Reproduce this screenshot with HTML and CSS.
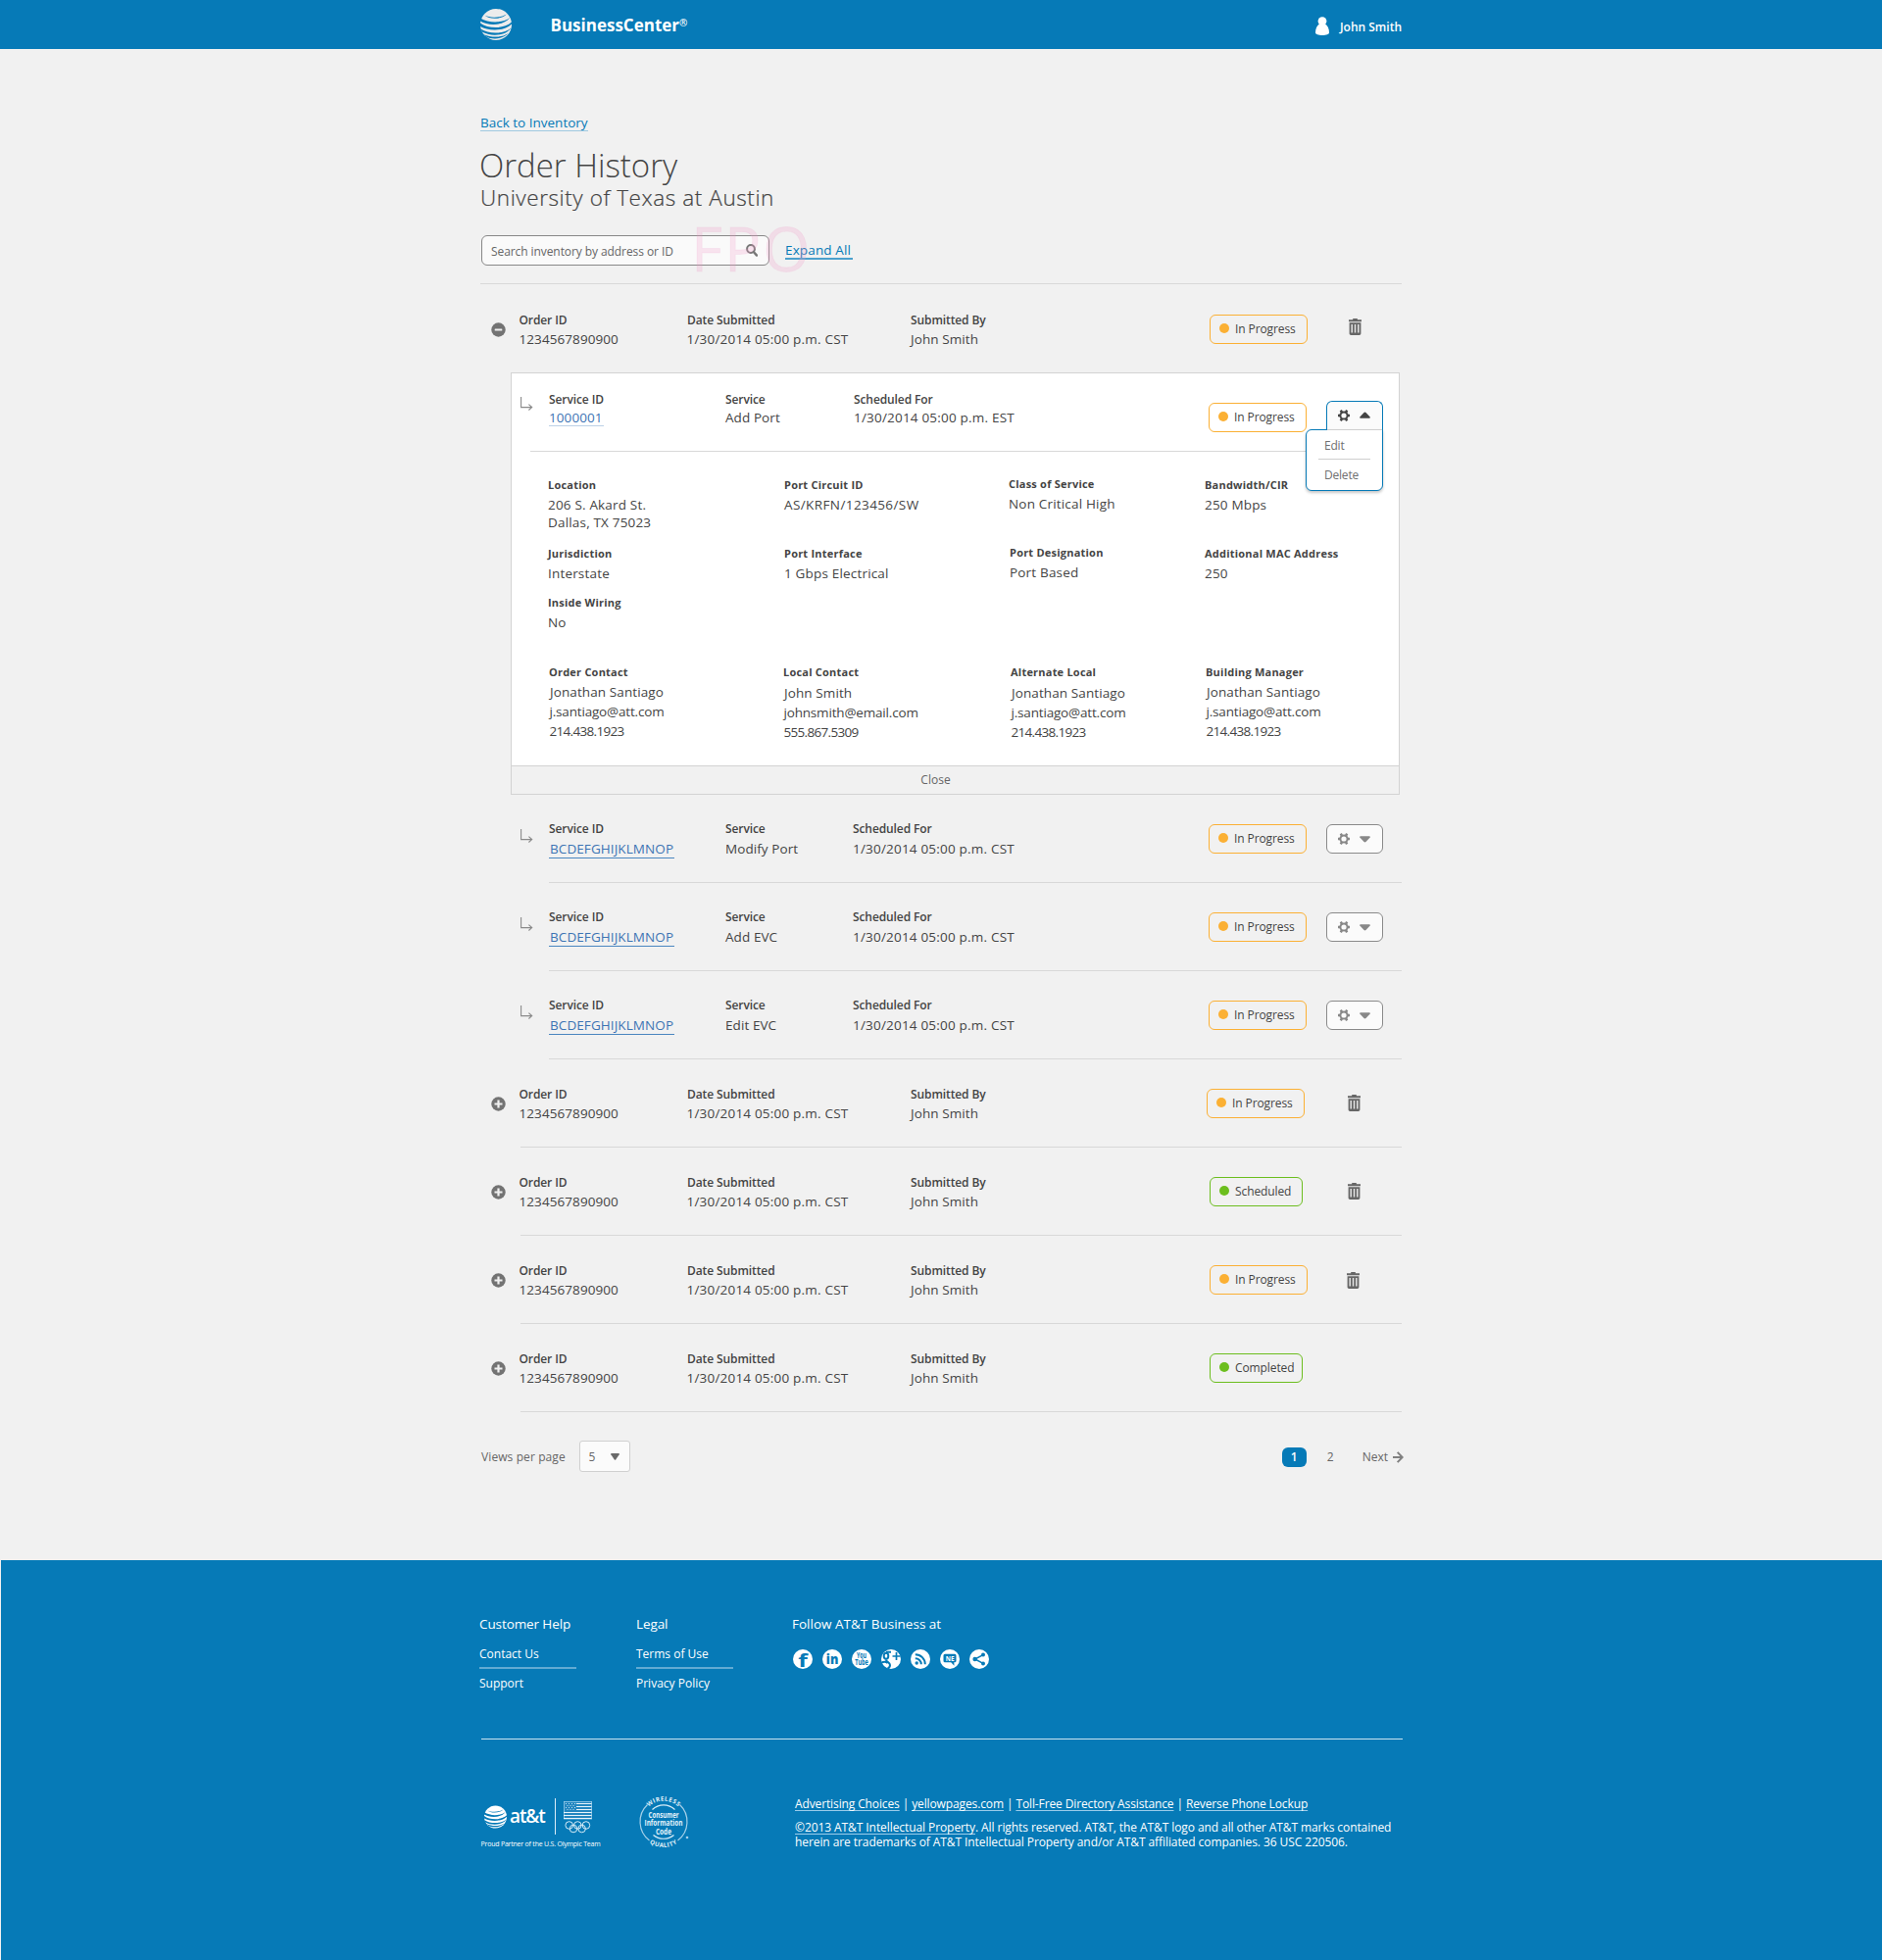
FILE: index.html
```html
<!DOCTYPE html>
<html lang="en">
<head>
<meta charset="utf-8">
<title>Order History</title>
<link rel="stylesheet" href="styles.css">
</head>
<body>
<svg class="sprite" aria-hidden="true">
  <symbol id="globe" viewBox="0 0 32 32">
    <circle cx="16" cy="16" r="16" fill="currentColor"/>
    <g class="globe-gap">
      <path d="M4.500 6.600C10 9.600 20 9.600 26.800 5.400C21.500 11 9.500 11.200 4.500 6.600Z"/>
      <path d="M0 9.500C9 15 23 14.600 30.200 9C24 17.400 8 17.600 0 12.500Z"/>
      <path d="M0 14.500C8 20.600 24 20.800 32 13.600L32 15.600C25 23.200 8 22.800 0 18Z"/>
      <path d="M.5 20.500C9 26.200 24 25.800 31.600 19.400C25 28.400 10 28.200 1.800 23.600Z"/>
      <path d="M4 26.200C11 29.600 22 29.600 28.600 25C22.500 31.600 11.500 31.400 6 28.400Z"/>
    </g>
  </symbol>
  <symbol id="minus" viewBox="0 0 15 15"><circle cx="7.5" cy="7.5" r="7.2" fill="#737373"/><rect x="3.7" y="6.4" width="7.6" height="2.2" rx=".6" fill="#f1f1f1"/></symbol>
  <symbol id="plus" viewBox="0 0 15 15"><circle cx="7.5" cy="7.5" r="7.2" fill="#737373"/><path d="M7.5 3.5v8M3.5 7.5h8" stroke="#f1f1f1" stroke-width="2.2"/></symbol>
  <symbol id="trash" viewBox="0 0 13 17">
    <path d="M4.2 0h4.6v1.300H13v1.900H0V1.300h4.200z" fill="#666"/>
    <path d="M.6 4.300h11.800v11c0 .9-.7 1.700-1.700 1.700H2.300C1.300 17 .6 16.200 .6 15.300z" fill="#666"/>
    <path d="M3.200 6v8.500M6.500 6v8.500M9.800 6v8.500" stroke="#e4e4e4" stroke-width="1.500"/>
  </symbol>
  <symbol id="branch" viewBox="0 0 13 14"><path d="M.6 0v10.600h11M8.400 7.700l3.300 2.900-3.300 2.900" fill="none" stroke="#8a8a8a" stroke-width="1.100"/></symbol>
  <symbol id="gear" viewBox="0 0 12 12">
    <circle cx="6" cy="6" r="3.600" fill="none" stroke="currentColor" stroke-width="2"/>
    <path d="M9.500 6H12M0 6h2.500M8 2.800l1.200-2.200M4 2.800L2.800.6M8 9.200l1.200 2.200M4 9.200l-1.200 2.200" stroke="currentColor" stroke-width="2.500"/>
  </symbol>
  <symbol id="caret" viewBox="0 0 11 7"><path d="M.3 1.600Q-.2.3 1 .3H10Q11.200.3 10.700 1.600L6.500 6Q5.500 6.900 4.500 6Z" fill="currentColor"/></symbol>
</svg>

<header class="topbar">
  <div class="wrap topbar-in">
    <svg class="brand-globe"><use href="#globe"/></svg>
    <span class="brand">BusinessCenter<sup>®</sup></span>
    <span class="user">
      <svg width="14" height="19" viewBox="0 0 14 19"><circle cx="7" cy="4.600" r="4.400" fill="#fff"/><path d="M4 7.500h6C12.500 9 14 12.500 14 16.300C14 18 11 19 7 19S0 18 0 16.300C0 12.500 1.500 9 4 7.500Z" fill="#fff"/></svg>
      <span>John Smith</span>
    </span>
  </div>
</header>

<main class="wrap main">
  <a class="back">Back to Inventory</a>
  <h1>Order History</h1>
  <h2>University of Texas at Austin</h2>
  <div class="tools">
    <div class="search">
      <span>Search inventory by address or ID</span>
      <svg width="12" height="13" viewBox="0 0 12 13"><circle cx="5" cy="5" r="3.900" fill="none" stroke="#777" stroke-width="2"/><path d="M7.800 8l3.200 3.600" stroke="#777" stroke-width="2.400" stroke-linecap="round"/></svg>
    </div>
    <a class="expand">Expand All</a>
    <span class="fpo">FPO</span>
  </div>

  <section class="order first">
    <svg class="toggle"><use href="#minus"/></svg>
    <div class="order-body">
      <dl><dt>Order ID</dt><dd>1234567890900</dd></dl>
      <dl><dt>Date Submitted</dt><dd class="date">1/30/2014 05:00 p.m. CST</dd></dl>
      <dl><dt>Submitted By</dt><dd>John Smith</dd></dl>
      <span class="badge">In Progress</span>
      <svg class="trash"><use href="#trash"/></svg>
    </div>
  </section>

  <section class="panel">
    <div class="panel-head">
      <svg class="branch"><use href="#branch"/></svg>
      <dl><dt>Service ID</dt><dd><a class="sid plain">1000001</a></dd></dl>
      <dl><dt>Service</dt><dd>Add Port</dd></dl>
      <dl><dt>Scheduled For</dt><dd class="date">1/30/2014 05:00 p.m. EST</dd></dl>
      <span class="badge">In Progress</span>
      <div class="action open">
        <svg class="gear"><use href="#gear"/></svg><svg class="caret up"><use href="#caret"/></svg>
        <div class="menu"><span>Edit</span><span>Delete</span></div>
      </div>
    </div>
    <div class="rule"></div>
    <div class="details">
      <dl><dt>Location</dt><dd>206 S. Akard St.<br>Dallas, TX 75023</dd></dl>
      <dl><dt>Port Circuit ID</dt><dd class="wide">AS/KRFN/123456/SW</dd></dl>
      <dl class="raise"><dt>Class of Service</dt><dd>Non Critical High</dd></dl>
      <dl><dt>Bandwidth/CIR</dt><dd>250 Mbps</dd></dl>
      <dl><dt>Jurisdiction</dt><dd>Interstate</dd></dl>
      <dl><dt>Port Interface</dt><dd>1 Gbps Electrical</dd></dl>
      <dl class="raise in"><dt>Port Designation</dt><dd>Port Based</dd></dl>
      <dl><dt>Additional MAC Address</dt><dd>250</dd></dl>
      <dl class="full"><dt>Inside Wiring</dt><dd>No</dd></dl>
      <dl class="contact"><dt>Order Contact</dt><dd>Jonathan Santiago</dd><dd class="mail">j.santiago@att.com</dd><dd class="tel">214.438.1923</dd></dl>
      <dl class="contact low c2"><dt>Local Contact</dt><dd>John Smith</dd><dd class="mail">johnsmith@email.com</dd><dd class="tel">555.867.5309</dd></dl>
      <dl class="contact low c3"><dt>Alternate Local</dt><dd>Jonathan Santiago</dd><dd class="mail">j.santiago@att.com</dd><dd class="tel">214.438.1923</dd></dl>
      <dl class="contact"><dt>Building Manager</dt><dd>Jonathan Santiago</dd><dd class="mail">j.santiago@att.com</dd><dd class="tel">214.438.1923</dd></dl>
    </div>
    <div class="close">Close</div>
  </section>

  <section class="service">
    <svg class="branch"><use href="#branch"/></svg>
    <div class="service-body">
      <dl><dt>Service ID</dt><dd><a class="sid">BCDEFGHIJKLMNOP</a></dd></dl>
      <dl><dt>Service</dt><dd>Modify Port</dd></dl>
      <dl><dt>Scheduled For</dt><dd class="date">1/30/2014 05:00 p.m. CST</dd></dl>
      <span class="badge">In Progress</span>
      <div class="action"><svg class="gear"><use href="#gear"/></svg><svg class="caret"><use href="#caret"/></svg></div>
    </div>
  </section>
  <section class="service">
    <svg class="branch"><use href="#branch"/></svg>
    <div class="service-body">
      <dl><dt>Service ID</dt><dd><a class="sid">BCDEFGHIJKLMNOP</a></dd></dl>
      <dl><dt>Service</dt><dd>Add EVC</dd></dl>
      <dl><dt>Scheduled For</dt><dd class="date">1/30/2014 05:00 p.m. CST</dd></dl>
      <span class="badge">In Progress</span>
      <div class="action"><svg class="gear"><use href="#gear"/></svg><svg class="caret"><use href="#caret"/></svg></div>
    </div>
  </section>
  <section class="service">
    <svg class="branch"><use href="#branch"/></svg>
    <div class="service-body">
      <dl><dt>Service ID</dt><dd><a class="sid">BCDEFGHIJKLMNOP</a></dd></dl>
      <dl><dt>Service</dt><dd>Edit EVC</dd></dl>
      <dl><dt>Scheduled For</dt><dd class="date">1/30/2014 05:00 p.m. CST</dd></dl>
      <span class="badge">In Progress</span>
      <div class="action"><svg class="gear"><use href="#gear"/></svg><svg class="caret"><use href="#caret"/></svg></div>
    </div>
  </section>

  <section class="order shift">
    <svg class="toggle"><use href="#plus"/></svg>
    <div class="order-body">
      <dl><dt>Order ID</dt><dd>1234567890900</dd></dl>
      <dl><dt>Date Submitted</dt><dd class="date">1/30/2014 05:00 p.m. CST</dd></dl>
      <dl><dt>Submitted By</dt><dd>John Smith</dd></dl>
      <span class="badge">In Progress</span>
      <svg class="trash"><use href="#trash"/></svg>
    </div>
  </section>
  <section class="order">
    <svg class="toggle"><use href="#plus"/></svg>
    <div class="order-body">
      <dl><dt>Order ID</dt><dd>1234567890900</dd></dl>
      <dl><dt>Date Submitted</dt><dd class="date">1/30/2014 05:00 p.m. CST</dd></dl>
      <dl><dt>Submitted By</dt><dd>John Smith</dd></dl>
      <span class="badge done">Scheduled</span>
      <svg class="trash"><use href="#trash"/></svg>
    </div>
  </section>
  <section class="order third">
    <svg class="toggle"><use href="#plus"/></svg>
    <div class="order-body">
      <dl><dt>Order ID</dt><dd>1234567890900</dd></dl>
      <dl><dt>Date Submitted</dt><dd class="date">1/30/2014 05:00 p.m. CST</dd></dl>
      <dl><dt>Submitted By</dt><dd>John Smith</dd></dl>
      <span class="badge">In Progress</span>
      <svg class="trash"><use href="#trash"/></svg>
    </div>
  </section>
  <section class="order">
    <svg class="toggle"><use href="#plus"/></svg>
    <div class="order-body">
      <dl><dt>Order ID</dt><dd>1234567890900</dd></dl>
      <dl><dt>Date Submitted</dt><dd class="date">1/30/2014 05:00 p.m. CST</dd></dl>
      <dl><dt>Submitted By</dt><dd>John Smith</dd></dl>
      <span class="badge done">Completed</span>
    </div>
  </section>

  <div class="pager">
    <span class="views">Views per page</span>
    <span class="select">5 <svg width="9" height="7" viewBox="0 0 9 7"><path d="M.8 0H8.200Q9.200.2 8.700 1.200L5.300 6.300Q4.500 7.300 3.700 6.300L.3 1.200Q-.2.2.8 0Z" fill="#6a6a6a"/></svg></span>
    <span class="page on">1</span>
    <span class="page">2</span>
    <span class="next">Next <svg width="11" height="12" viewBox="0 0 11 12"><path d="M0 6h9.500M4.700.9l5 5.100-5 5.100" fill="none" stroke="#808080" stroke-width="2"/></svg></span>
  </div>
</main>

<footer class="foot">
  <div class="wrap">
    <div class="foot-top">
      <div class="links"><h3>Customer Help</h3><a>Contact Us</a><a>Support</a></div>
      <div class="links"><h3>Legal</h3><a>Terms of Use</a><a>Privacy Policy</a></div>
      <div class="follow">
        <h3>Follow AT&amp;T Business at</h3>
        <div class="social">
          <svg viewBox="0 0 20 20"><circle cx="10" cy="10" r="10" fill="#fff"/><text class="ink" x="5.200" y="18" font-size="18.500" font-weight="700" textLength="9.600" lengthAdjust="spacingAndGlyphs">f</text></svg>
          <svg viewBox="0 0 20 20"><circle cx="10" cy="10" r="10" fill="#fff"/><text class="ink" x="3.800" y="15.400" font-size="14.500" font-weight="800" textLength="12.500" lengthAdjust="spacingAndGlyphs">in</text></svg>
          <svg viewBox="0 0 20 20"><circle cx="10" cy="10" r="10" fill="#fff"/><text class="ink" x="5" y="9.300" font-size="8" font-weight="700" textLength="10" lengthAdjust="spacingAndGlyphs">You</text><text class="ink" x="3.200" y="16.300" font-size="8" font-weight="700" textLength="13.600" lengthAdjust="spacingAndGlyphs">Tube</text></svg>
          <svg viewBox="0 0 20 20"><circle cx="10" cy="10" r="10" fill="#fff"/><g class="lines" stroke-width="2"><ellipse cx="5" cy="6.700" rx="2.300" ry="3"/><path d="M5 2.800h5M5.500 10.500c-1.500 2 3.500 2.500 3.500 5.500 0 2-1.200 3-2.500 3.600M0 14c2.500-1.600 5-1.200 6.500 0"/><path d="M15.500 3v8M11.500 7h8" stroke-width="1.700"/></g></svg>
          <svg viewBox="0 0 20 20"><circle cx="10" cy="10" r="10" fill="#fff"/><g class="lines" stroke-width="2"><path d="M4.800 9.300a6 6 0 0 1 6 6M4.800 5.200a10 10 0 0 1 10 10"/></g><circle cx="6.200" cy="14" r="1.700" fill="#067ab7"/></svg>
          <svg viewBox="0 0 20 20"><circle cx="10" cy="10" r="10" fill="#fff"/><path d="M5 4.700h10q1.500 0 1.500 1.500v5.600q0 1.500-1.500 1.500h-.7l.2 3.400-3.300-3.400H5q-1.500 0-1.500-1.500V6.200Q3.500 4.700 5 4.700z" fill="#067ab7"/><text x="5.700" y="11.900" fill="#fff" font-size="7.500" font-weight="700" textLength="8.800" lengthAdjust="spacingAndGlyphs">NE</text></svg>
          <svg viewBox="0 0 20 20"><circle cx="10" cy="10" r="10" fill="#fff"/><path class="lines" d="M14 5.600L5.600 10l8.400 4.400" stroke-width="1.500"/><g fill="#067ab7"><circle cx="5.600" cy="10" r="2.200"/><circle cx="14" cy="5.600" r="2"/><circle cx="14" cy="14.400" r="2"/></g></svg>
        </div>
      </div>
    </div>
    <div class="foot-bottom">
      <div class="partner">
        <div class="partner-row">
          <svg class="small-globe"><use href="#globe"/></svg>
          <span class="att">at&amp;t</span>
          <span class="bar"></span>
          <svg class="flag" width="29" height="33" viewBox="0 0 29 33">
            <rect x=".4" y=".4" width="28.200" height="17.600" fill="#2387c0" stroke="#9accea" stroke-width=".8"/>
            <path d="M13 2.500h15.500M13 5.500h15.500M13 8.500h15.500M0 11.500h28.500M0 14.500h28.500M0 17.500h28.500" stroke="#e6f3fa" stroke-width="1.200"/>
            <path d="M2 2.500h10M3.500 4.500h8M2 6.500h10M3.500 8.500h8" stroke="#cbe5f4" stroke-width=".9" stroke-dasharray="1 2"/>
            <g fill="none" stroke="#d9edf8" stroke-width="1"><circle cx="5.700" cy="24.500" r="3.800"/><circle cx="14.300" cy="24.500" r="3.800"/><circle cx="22.900" cy="24.500" r="3.800"/><circle cx="10" cy="28" r="3.800"/><circle cx="18.600" cy="28" r="3.800"/></g>
          </svg>
        </div>
        <div class="proud">Proud Partner of the U.S. Olympic Team</div>
      </div>
      <svg class="seal" width="54" height="54" viewBox="0 0 54 54">
        <path id="arcTop" d="M3.500 27a21.500 21.500 0 0 1 43 0" fill="none"/>
        <path id="arcBottom" d="M-1 27a26 26 0 0 0 52 0" fill="none"/>
        <g fill="none" stroke="#a5d0e9" stroke-width="1.200"><path d="M8.500 9.500a24 24 0 0 0 2 36.500M41.500 9.500a24 24 0 0 1-2 36.500"/><path d="M13.500 14.500a16.500 16.500 0 0 1 23 0M14.500 40.500a16.500 16.500 0 0 0 21 0" stroke="#d9edf8"/></g>
        <g fill="#e3f2fa" font-weight="700" text-anchor="middle">
          <text font-size="6.200" letter-spacing=".5"><textPath href="#arcTop" startOffset="50%">WIRELESS</textPath></text>
          <text font-size="6.200" letter-spacing=".5"><textPath href="#arcBottom" startOffset="50%">QUALITY</textPath></text>
          <text x="25" y="22.500" font-size="8.500" textLength="31" lengthAdjust="spacingAndGlyphs">Consumer</text>
          <text x="25" y="31.300" font-size="8.500" textLength="39" lengthAdjust="spacingAndGlyphs">Information</text>
          <text x="25" y="39.700" font-size="8.500" textLength="16" lengthAdjust="spacingAndGlyphs">Code</text>
        </g>
        <circle cx="49" cy="43" r="1.300" fill="#a5d0e9"/>
      </svg>
      <div class="legal">
        <p class="legal-links"><a>Advertising Choices</a> | <a>yellowpages.com</a> | <a>Toll-Free Directory Assistance</a> | <a>Reverse Phone Lockup</a></p>
        <p class="copy"><a>©2013 AT&amp;T Intellectual Property</a>. All rights reserved. AT&amp;T, the AT&amp;T logo and all other AT&amp;T marks contained<br>herein are trademarks of AT&amp;T Intellectual Property and/or AT&amp;T affiliated companies. 36 USC 220506.</p>
      </div>
    </div>
  </div>
</footer>
</body>
</html>
```
FILE: styles.css
```css
* { box-sizing: border-box; }
body {
  margin: 0;
  background: #f1f1f1;
  color: #444;
  font-family: "Open Sans", "Noto Sans", sans-serif;
  font-size: 13.5px;
}
h1, h2, h3, p, dl, dt, dd { margin: 0; font-weight: 400; }
svg { display: block; }
.sprite { display: none; }
.wrap { width: 940px; margin: 0 auto; }

/* Top bar */
.topbar { height: 50px; background: #067ab7; color: #fff; }
.topbar-in { display: flex; align-items: center; height: 50px; }
.brand-globe { width: 32px; height: 32px; color: #ececec; }
.globe-gap { fill: #067ab7; }
.brand { margin-left: 39.500px; padding-top: 2px; font-size: 17px; font-weight: 700; line-height: 24px; }
.brand sup { display: inline-block; font-size: 10px; font-weight: 600; line-height: 8px; vertical-align: 5px; }
.user { display: flex; align-items: center; gap: 10.500px; margin-left: auto; padding-top: 3px; font-size: 12px; font-weight: 650; }
.user span { padding-top: 1px; }

/* Page heading and tools */
.main { display: flex; flex-direction: column; padding: 68px 0 90px; }
.back { align-self: flex-start; height: 16px; border-bottom: 1px solid #9fc9e0; color: #067ab7; line-height: 15px; }
h1 { margin: 15px 0 0 -1px; font-size: 33px; font-weight: 300; line-height: 40px; }
h2 { font-size: 22.500px; font-weight: 300; line-height: 26px; letter-spacing: .58px; -webkit-text-stroke: .2px #444; }
.tools { display: flex; align-items: center; position: relative; height: 75px; padding: 6px 0 0 1px; border-bottom: 1px solid #d8d8d8; }
.search {
  display: flex; align-items: center; justify-content: space-between;
  width: 294px; height: 31px; padding: 0 11px 0 9px;
  border: 1px solid #888; border-radius: 6px; background: #fafafa;
  color: #666; font-size: 12px; letter-spacing: -.08px;
}
.search span { padding-top: 2px; }
.expand { margin: 1px 0 0 16px; padding-right: 2px; border-bottom: 2px solid #4ba0cd; color: #067ab7; line-height: 16px; letter-spacing: .14px; }
.fpo { position: absolute; left: 215px; top: -2px; color: rgba(240, 150, 200, .23); font-size: 62px; line-height: 80px; letter-spacing: 2px; -webkit-text-stroke: .8px rgba(240, 150, 200, .12); }

/* Label and value pairs */
dt { font-size: 12px; font-weight: 650; line-height: 16px; letter-spacing: -.1px; white-space: nowrap; }
dd { margin-top: 1px; line-height: 20px; letter-spacing: .08px; white-space: nowrap; }
.date { letter-spacing: .2px; }

/* Order rows */
.order { display: flex; }
.first { padding-top: 1px; }
.toggle { flex: none; width: 15px; height: 15px; margin: 37.500px 15px 0 10.500px; }
.order-body {
  display: grid; grid-template-columns: 170px 228px 305px 142px 1fr;
  flex: 1; height: 90px; margin-left: .5px; padding-top: 28px;
  border-bottom: 1px solid #d8d8d8;
}
.order-body dl:first-child { margin-left: -1.500px; }
.order-body .date { margin-left: -.5px; }
.first .order-body { height: 89px; border: 0; }
.trash { width: 13px; height: 17px; margin: 8px 0 0 -1px; }
.first .trash { margin: 6px 0 0 0; }
.third .trash { margin: 9px 0 0 -2px; }
.shift .badge { margin-left: -3px; }

.badge {
  display: flex; align-items: center; gap: 6px;
  width: 100px; height: 30px; margin-top: 2px; padding: 0 0 1px 9px;
  border: 1px solid #fbb034; border-radius: 6px;
  font-size: 12px; letter-spacing: -.1px; white-space: nowrap;
}
.badge::before { content: ""; width: 10px; height: 10px; margin-top: -1px; border-radius: 50%; background: #fbb034; }
.badge.done { width: 95px; border-color: #6cbe1e; }
.badge.done::before { background: #6cbe1e; }

/* Service rows */
.service { display: flex; padding-left: 41px; }
.branch { flex: none; width: 13px; height: 14px; }
.service .branch { margin: 35px 16px 0 0; }
.service-body, .panel-head { display: grid; grid-template-columns: 180px 130px 363px 120px 1fr; }
.service-body { flex: 1; height: 90px; padding-top: 27px; border-bottom: 1px solid #d8d8d8; }
.service-body dd { margin-top: 2px; }
.service-body .badge { margin-top: 3px; }
.sid { display: inline-block; height: 19px; padding-right: 1px; border-bottom: 1px solid #4a86c0; color: #3d74b4; line-height: 20px; vertical-align: top; }
.service-body .sid { height: 20px; padding-left: 1px; }
.sid.plain { border-color: #bdd0e6; }
.action {
  display: flex; align-items: center; position: relative;
  width: 58px; height: 30px; margin-top: 3px; padding-left: 11px;
  border: 1px solid #8a8a8a; border-radius: 6px; background: #fbfbfb; color: #888;
}
.gear { width: 12px; height: 12px; margin-top: -1px; }
.caret { width: 11px; height: 7px; margin-left: 10px; }
.caret.up { margin-top: -2px; transform: rotate(180deg); }

/* Expanded service */
.panel { width: 907px; height: 431px; margin-left: 31px; border: 1px solid #d3d3d3; background: #fff; }
.panel-head { grid-template-columns: 29px 180px 131px 362px 120px 1fr; height: 79px; padding: 19px 0 0 9px; }
.panel-head dd { margin-top: 0; }
.panel-head .branch { margin-top: 5px; }
.panel-head .badge { margin-top: 11px; }
.rule { width: 791px; height: 1px; margin-left: 19px; background: #d8d8d8; }
.action.open { z-index: 1; height: 30px; margin-top: 9px; border-color: #067ab7; border-bottom: 0; border-radius: 6px 6px 0 0; color: #444; }
.menu {
  position: absolute; right: -1px; top: 28px; width: 79px; height: 63px; padding: 7px 12px;
  border: 1px solid #067ab7; border-radius: 6px 0 6px 6px; background: #fff;
  box-shadow: 0 2px 3px rgba(0, 0, 0, .22);
  color: #707070; font-size: 12px; line-height: 18px; letter-spacing: -.2px;
}
.menu::before { content: ""; position: absolute; top: -1px; right: 0; width: 56px; height: 1px; background: #cfcfcf; }
.menu span { display: block; padding-left: 6px; }
.menu span + span { margin-top: 4px; padding-top: 7px; border-top: 1px solid #cfcfcf; }
.details {
  display: grid; grid-template: 70px 50px 70px 102px / 241px 229px 200px 1fr;
  height: 320px; padding: 26px 0 0 37px;
}
.details dt { font-size: 11px; font-weight: 700; letter-spacing: .22px; }
.details dd { margin-top: 3px; line-height: 18px; letter-spacing: .18px; }
.details .wide { letter-spacing: .4px; }
.details .raise { margin-top: -1px; }
.details .in { margin-left: 1px; }
.full { grid-column: 1 / -1; }
.contact { padding: 1px 0 0 1px; }
.details .contact dd { margin: 0; padding-left: 1px; line-height: 20px; letter-spacing: .1px; }
.contact dt { margin-bottom: 2px; }
.contact.low dt { margin-bottom: 3px; }
.contact.c2 { padding-left: 0; margin-left: -1px; }
.contact.c3 { padding-left: 2px; }
.details .contact .mail { padding-left: .5px; letter-spacing: -.18px; }
.details .contact .tel { padding-left: .5px; letter-spacing: -.68px; }
.close { height: 29px; padding-right: 40px; border-top: 1px solid #d3d3d3; background: #f1f1f1; color: #666; font-size: 12px; line-height: 28px; text-align: center; }

/* Pagination */
.pager { display: flex; align-items: center; height: 32px; margin-top: 29px; font-size: 12px; color: #666; }
.views { width: 100.500px; padding: 1px 0 0 1px; letter-spacing: .1px; }
.select { display: flex; align-items: center; justify-content: space-between; width: 52px; height: 32px; padding: 0 10px 0 9px; border: 1px solid #d0d0d0; border-radius: 3px; background: #fbfbfb; }
.page { width: 25px; height: 20px; margin-top: 2px; border-radius: 6px; line-height: 19px; text-align: center; }
.page.on { margin-left: auto; background: #067ab7; color: #fff; font-weight: 600; }
.page + .page { margin-left: 12px; }
.next { display: flex; align-items: center; gap: 5px; margin: 1px -2px 0 20px; }

/* Footer */
.foot { height: 408px; margin-left: 1px; padding-top: 55px; background: #067ab7; color: #fff; font-size: 12px; }
.foot .wrap { position: relative; right: .5px; }
.foot-top { display: grid; grid-template-columns: 160px 159px 1fr; height: 127px; margin-left: -1px; }
h3 { margin-bottom: 12px; font-size: 13.5px; line-height: 20px; letter-spacing: -.1px; }
.follow h3 { letter-spacing: 0; }
.links a { display: block; width: 99px; line-height: 18px; }
.links a + a { margin-top: 4px; padding-top: 6px; border-top: 2px solid #62aad3; }
.social { display: flex; gap: 10px; margin: 16px 0 0 1px; }
.social svg { width: 20px; height: 20px; overflow: visible; }
.ink { fill: #067ab7; }
.lines { fill: none; stroke: #067ab7; }
.foot-bottom { display: grid; grid-template-columns: 161px 159px 1fr; width: 940px; margin-left: 1px; padding-top: 57px; border-top: 1px solid #c9e2f0; }
.partner-row { display: flex; align-items: flex-start; height: 40px; margin-top: 3px; padding-left: 3px; }
.small-globe { width: 23px; height: 24px; margin-top: 7px; color: #fff; }
.att { width: 43px; padding-left: 3px; font-size: 19px; font-weight: 600; line-height: 36px; letter-spacing: -1.100px; }
.bar { width: 1px; height: 37px; margin: 0 8px 0 6px; background: #d9edf8; }
.flag { margin-top: 3px; }
.proud { margin: 2px 0 0 -.5px; font-size: 7px; line-height: 10px; letter-spacing: -.21px; white-space: nowrap; }
.seal { overflow: visible; }
.legal { white-space: nowrap; }
.legal a { text-decoration: underline; text-decoration-thickness: 1px; text-underline-offset: 2px; text-decoration-color: #9accea; text-decoration-skip-ink: none; }
.legal-links { margin-bottom: 7px; line-height: 18px; letter-spacing: -.12px; }
.copy { line-height: 15px; letter-spacing: -.08px; }
```
